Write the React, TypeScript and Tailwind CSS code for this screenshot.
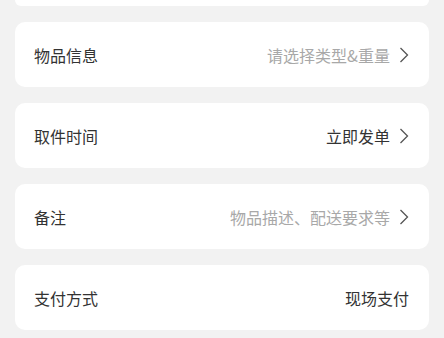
interface RowProps {
	label: string;
	value: string;
	placeholder?: boolean;
	arrow?: boolean;
}

function Arrow() {
	return (
		<svg width="10" height="16" viewBox="0 0 10 16" fill="none" className="text-[#555555]">
			<path d="M1.5 1 L8.5 8 L1.5 15" stroke="currentColor" strokeWidth="1.3" />
		</svg>
	);
}

function Row(props: RowProps) {
	return (
		<div className="flex h-[65px] items-center justify-between rounded-[10px] bg-white pl-[19px] pr-[20px]">
			<span className="text-[16px] text-[#333333]">{props.label}</span>
			<div className="flex items-center gap-[9px]">
				<span
					className={
						props.placeholder
							? "text-[16px] text-[#a8a8a8]"
							: "text-[16px] text-[#333333]"
					}
				>
					{props.value}
				</span>
				{props.arrow && <Arrow />}
			</div>
		</div>
	);
}

export default function App() {
	return (
		<div
			className="min-h-[338px] w-full bg-[#f2f2f2] px-[15px]"
			style={{ fontFamily: '"Noto Sans CJK SC", "Noto Sans", sans-serif' }}
		>
			<div className="flex flex-col gap-[16px]">
				{/* previous card, scrolled mostly out of view */}
				<div className="h-[6px] rounded-b-[10px] bg-white" />
				<Row label="物品信息" value="请选择类型&重量" placeholder arrow />
				<Row label="取件时间" value="立即发单" arrow />
				<Row label="备注" value="物品描述、配送要求等" placeholder arrow />
				<Row label="支付方式" value="现场支付" />
			</div>
		</div>
	);
}
